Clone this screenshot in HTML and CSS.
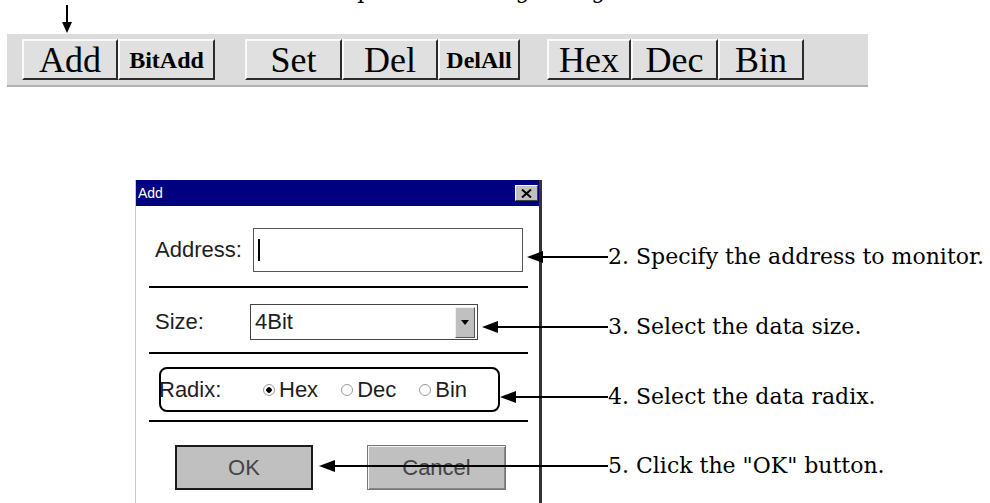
FILE: index.html
```html
<!DOCTYPE html>
<html lang="en">
<head>
    <meta charset="UTF-8">
    <meta name="viewport" content="width=device-width, initial-scale=1.0">
    <title>Add dialog</title>
    <link rel="stylesheet" href="styles.css">
</head>
<body>
    <div class="page">
        <p class="lead">1. Click the Add button to open the Setting dialog box.</p>
        <svg class="pointer" width="14" height="29" viewBox="0 0 14 29">
            <line x1="7" y1="0" x2="7" y2="18" stroke="#000" stroke-width="2"/>
            <polygon points="2,17 12,17 7,28" fill="#000"/>
        </svg>

        <div class="toolbar">
            <div class="tool-group">
                <button class="tool w-add">Add</button>
                <button class="tool small w-bitadd">BitAdd</button>
            </div>
            <div class="tool-group g-edit">
                <button class="tool w-set">Set</button>
                <button class="tool w-del">Del</button>
                <button class="tool small w-delall">DelAll</button>
            </div>
            <div class="tool-group g-radix">
                <button class="tool w-hex">Hex</button>
                <button class="tool w-dec">Dec</button>
                <button class="tool w-bin">Bin</button>
            </div>
        </div>

        <div class="dialog">
            <div class="titlebar">
                <span>Add</span>
                <span class="close">
                    <svg width="11" height="9" viewBox="0 0 11 9">
                        <path d="M1 0.5 L10 8.5 M10 0.5 L1 8.5" stroke="#000" stroke-width="2"/>
                    </svg>
                </span>
            </div>
            <div class="dialog-body">
                <div class="field">
                    <label class="addr-label">Address:</label>
                    <div class="textbox"><span class="caret"></span></div>
                </div>
                <hr class="sep">
                <div class="field size-field">
                    <label class="size-label">Size:</label>
                    <div class="combo">
                        <span>4Bit</span>
                        <span class="drop"><span class="tri"></span></span>
                    </div>
                </div>
                <hr class="sep sep-2">
                <div class="radix">
                    <span class="radix-label">Radix:</span>
                    <span class="radio"><span class="dot checked"></span>Hex</span>
                    <span class="radio"><span class="dot"></span>Dec</span>
                    <span class="radio"><span class="dot"></span>Bin</span>
                </div>
                <hr class="sep sep-3">
                <div class="actions">
                    <button class="btn btn-ok">OK</button>
                    <button class="btn btn-cancel">Cancel</button>
                </div>
            </div>
        </div>

        <div class="callout c2"><span class="arrow"><span class="head"></span><span class="shaft"></span></span>2. Specify the address to monitor.</div>
        <div class="callout c3"><span class="arrow"><span class="head"></span><span class="shaft"></span></span>3. Select the data size.</div>
        <div class="callout c4"><span class="arrow"><span class="head"></span><span class="shaft"></span></span>4. Select the data radix.</div>
        <div class="callout c5"><span class="arrow"><span class="head"></span><span class="shaft"></span></span>5. Click the "OK" button.</div>
    </div>
</body>
</html>
```

FILE: styles.css
```css
* {
    box-sizing: border-box;
}

body {
    margin: 0;
    background-color: #fff;
}

.page {
    position: relative;
    display: flex;
    flex-direction: column;
    align-items: flex-start;
    height: 503px;
    overflow: hidden;
}

.page > * {
    flex-shrink: 0;
}

.lead {
    margin: -20px 0 0 49px;
    height: 22px;
    font: 22px/22px "DejaVu Serif", serif;
    white-space: nowrap;
}

.pointer {
    display: block;
    margin: 3px 0 0 60px;
}

/* toolbar */
.toolbar {
    display: flex;
    margin-left: 7px;
    width: 861px;
    height: 53px;
    padding: 5px 0 0 15px;
    background-color: #dcdcdc;
    border-bottom: 2px solid #b0b0b0;
}

.tool-group {
    display: flex;
}

.g-edit {
    margin-left: 30px;
}

.g-radix {
    margin-left: 27px;
}

.tool {
    display: flex;
    align-items: center;
    justify-content: center;
    height: 41px;
    padding: 0;
    background-color: #e0e0e0;
    border-style: solid;
    border-width: 2px;
    border-color: #fafafa #2b2b2b #2b2b2b #fafafa;
    font: 36px/1 "Liberation Serif", serif;
    color: #000;
}

.tool.small {
    font-size: 24px;
    font-weight: bold;
}

.w-add { width: 96px; }
.w-bitadd { width: 97px; }
.w-set { width: 97px; }
.w-del { width: 96px; }
.w-delall { width: 82px; }
.w-hex { width: 84px; }
.w-dec { width: 87px; }
.w-bin { width: 86px; }

/* dialog */
.dialog {
    margin: 93px 0 0 135px;
    width: 407px;
    height: 340px;
    background-color: #fff;
    border-left: 1px solid #c8c8c8;
    border-right: 3px solid #333;
}

.titlebar {
    display: flex;
    align-items: center;
    justify-content: space-between;
    height: 26px;
    padding: 0 1px 0 2px;
    background-color: #000080;
    color: #fff;
    font: 14px "Liberation Sans", sans-serif;
}

.close {
    display: flex;
    align-items: center;
    justify-content: center;
    width: 23px;
    height: 16px;
    background-color: #c0c0c0;
    border: 1px solid;
    border-color: #fff #404040 #404040 #fff;
}

.dialog-body {
    padding-top: 22px;
    font: 22px "Liberation Sans", sans-serif;
    color: #1e1e1e;
}

.field {
    display: flex;
    align-items: center;
    padding-left: 19px;
}

.addr-label {
    width: 98px;
}

.textbox {
    display: flex;
    align-items: center;
    width: 270px;
    height: 44px;
    border: 1px solid #555;
}

.caret {
    margin-left: 4px;
    width: 2px;
    height: 22px;
    background-color: #000;
}

.sep {
    margin: 14px 0 0 13px;
    width: 379px;
    height: 2px;
    border: none;
    background-color: #000;
}

.size-field {
    margin-top: 16px;
}

.size-label {
    width: 95px;
}

.combo {
    display: flex;
    align-items: center;
    width: 228px;
    height: 36px;
    padding: 0 2px 0 4px;
    border: 1px solid #444;
}

.drop {
    display: flex;
    align-items: center;
    justify-content: center;
    margin-left: auto;
    width: 20px;
    height: 31px;
    background-color: #c0c0c0;
    border: 1px solid;
    border-color: #f0f0f0 #555 #555 #f0f0f0;
}

.tri {
    width: 0;
    height: 0;
    border-top: 5px solid #000;
    border-left: 4px solid transparent;
    border-right: 4px solid transparent;
}

.sep-2 {
    margin-top: 12px;
}

.radix {
    display: flex;
    align-items: center;
    margin: 13px 0 0 23px;
    width: 341px;
    height: 45px;
    border: 2px solid #000;
    border-radius: 8px;
}

.radix-label {
    margin-left: -2px;
    width: 104px;
}

.radio {
    display: flex;
    align-items: center;
    gap: 4px;
    margin-right: 23px;
}

.dot {
    width: 12px;
    height: 12px;
    border: 1px solid #999;
    border-radius: 50%;
    background-color: #fff;
}

.dot.checked {
    background: radial-gradient(circle, #000 0 2.5px, #fff 3px);
}

.sep-3 {
    margin-top: 8px;
}

.actions {
    display: flex;
    gap: 54px;
    margin-top: 23px;
    padding-left: 39px;
}

.btn {
    height: 45px;
    padding: 0;
    background-color: #c0c0c0;
    font: 22px "Liberation Sans", sans-serif;
    color: #444;
}

.btn-ok {
    width: 138px;
    border: 2px solid #1a1a1a;
}

.btn-cancel {
    width: 139px;
    border: 1px solid #777;
    box-shadow: inset 1px 1px #f4f4f4, inset -1px -1px #888;
}

/* annotations */
.callout {
    position: absolute;
    display: flex;
    align-items: center;
    height: 30px;
    font: 22px/30px "DejaVu Serif", serif;
    color: #000;
    white-space: nowrap;
}

.arrow {
    display: flex;
    align-items: center;
    flex: none;
}

.head {
    width: 0;
    height: 0;
    border-right: 16px solid #000;
    border-top: 6px solid transparent;
    border-bottom: 6px solid transparent;
}

.shaft {
    flex: 1;
    height: 2px;
    background-color: #000;
}

.c2 { left: 527px; top: 242px; }
.c2 .arrow { width: 81px; }
.c3 { left: 482px; top: 312px; }
.c3 .arrow { width: 126px; }
.c4 { left: 500px; top: 382px; }
.c4 .arrow { width: 108px; }
.c5 { left: 319px; top: 451px; }
.c5 .arrow { width: 289px; }
```
